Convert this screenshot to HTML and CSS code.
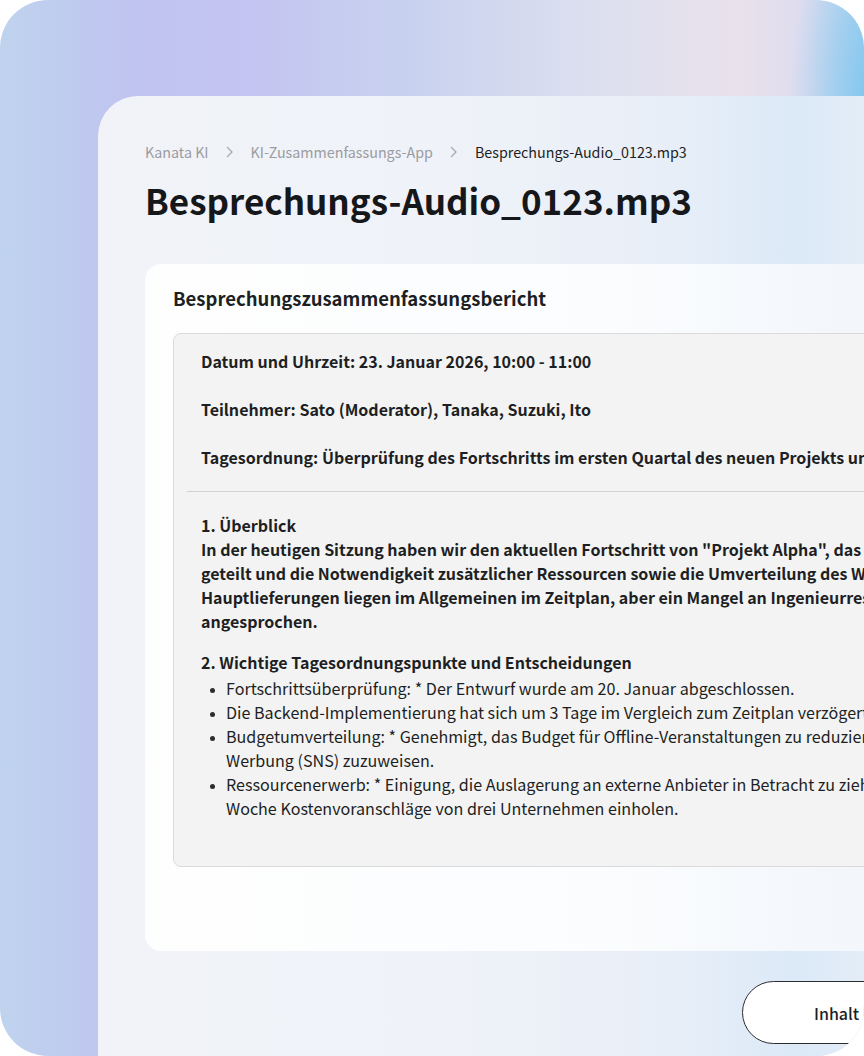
FILE: index.html
```html
<!DOCTYPE html>
<html lang="de">
<head>
<meta charset="utf-8">
<title>Besprechungs-Audio_0123.mp3</title>
<link rel="stylesheet" href="styles.css">
</head>
<body>
<div class="frame">
  <div class="panel">
    <nav class="crumbs">
      <span class="crumb">Kanata KI</span>
      <svg class="chev" width="8" height="12" viewBox="0 0 8 12"><path d="M1.5 1.5 L6 6 L1.5 10.5" fill="none" stroke="#a9abb0" stroke-width="1.4" stroke-linecap="round" stroke-linejoin="round"/></svg>
      <span class="crumb">KI-Zusammenfassungs-App</span>
      <svg class="chev" width="8" height="12" viewBox="0 0 8 12"><path d="M1.5 1.5 L6 6 L1.5 10.5" fill="none" stroke="#a9abb0" stroke-width="1.4" stroke-linecap="round" stroke-linejoin="round"/></svg>
      <span class="crumb current">Besprechungs-Audio_0123.mp3</span>
    </nav>
    <h1 class="title">Besprechungs-Audio_0123.mp3</h1>

    <section class="card">
      <h2 class="card-title">Besprechungszusammenfassungsbericht</h2>
      <div class="report">
        <div class="meta">
          <p>Datum und Uhrzeit: 23. Januar 2026, 10:00 - 11:00</p>
          <p>Teilnehmer: Sato (Moderator), Tanaka, Suzuki, Ito</p>
          <p>Tagesordnung: Überprüfung des Fortschritts im ersten Quartal des neuen Projekts und Umverteilung des Budgets</p>
        </div>
        <hr class="rule">
        <div class="body">
          <p class="strong">1. Überblick<br>In der heutigen Sitzung haben wir den aktuellen Fortschritt von "Projekt Alpha", das im April starten soll, mit allen Beteiligten<br>geteilt und die Notwendigkeit zusätzlicher Ressourcen sowie die Umverteilung des Werbebudgets besprochen. Die<br>Hauptlieferungen liegen im Allgemeinen im Zeitplan, aber ein Mangel an Ingenieurressourcen wurde als Risiko<br>angesprochen.</p>
          <p class="strong sec">2. Wichtige Tagesordnungspunkte und Entscheidungen</p>
          <ul class="items">
            <li>Fortschrittsüberprüfung: * Der Entwurf wurde am 20. Januar abgeschlossen.</li>
            <li>Die Backend-Implementierung hat sich um 3 Tage im Vergleich zum Zeitplan verzögert.</li>
            <li>Budgetumverteilung: * Genehmigt, das Budget für Offline-Veranstaltungen zu reduzieren und der digitalen<br>Werbung (SNS) zuzuweisen.</li>
            <li>Ressourcenerwerb: * Einigung, die Auslagerung an externe Anbieter in Betracht zu ziehen. Suzuki wird bis nächste<br>Woche Kostenvoranschläge von drei Unternehmen einholen.</li>
          </ul>
        </div>
      </div>
    </section>

    <div class="footer">
      <button class="btn" type="button">Inhalt kopieren</button>
    </div>
  </div>
</div>
</body>
</html>
```
FILE: styles.css
```css
* { box-sizing: border-box; }
html, body { margin: 0; padding: 0; background: #ffffff; }
body {
  font-family: "Noto Sans CJK JP", "Noto Sans", sans-serif;
  color: #1d1f23;
}
.frame {
  width: 864px;
  height: 1056px;
  border-radius: 48px;
  overflow: hidden;
  padding: 96px 0 0 98px;
  background:
    radial-gradient(ellipse 90px 220px at 880px 100px, rgba(120,196,238,0.95), rgba(140,205,238,0) 100%),
    linear-gradient(90deg, #bfd3ee 0px, #c0c4f0 130px, #c3c4f1 240px, #c9d2ef 420px, #dde0ef 600px, #e9e1ec 740px, #dcdcef 810px, #b8d6f0 864px);
}
.panel {
  width: 931px;
  height: 1000px;
  border-top-left-radius: 40px;
  padding: 0 47px;
  background:
    linear-gradient(90deg, #f1f3f8 0px, #eff2f8 350px, #e9eff8 550px, #dce9f7 700px, #e3edf7 766px);
}
.crumbs {
  display: flex;
  align-items: center;
  gap: 17px;
  padding-top: 44px;
  height: 68px;
  font-size: 14.3px;
  line-height: 24px;
}
.crumb { color: #9a9ca1; }
.crumb.current { color: #1d1f23; }
.chev { display: block; }
.title {
  margin: 13px 0 0 0;
  font-size: 35px;
  line-height: 46px;
  font-weight: 700;
  color: #15171a;
  letter-spacing: 0;
}
.card {
  margin-top: 41px;
  width: 837px;
  height: 687px;
  border-radius: 16px;
  background: linear-gradient(90deg, rgba(255,255,255,0.92) 0px, rgba(253,254,255,0.9) 450px, rgba(246,249,252,0.85) 720px);
  padding: 20px 28px 0 28px;
}
.card-title {
  margin: 0;
  font-size: 18.5px;
  line-height: 28px;
  font-weight: 700;
  color: #1d1f23;
}
.report {
  margin-top: 21px;
  height: 534px;
  background: #f3f3f3;
  border: 1px solid #dadada;
  border-radius: 8px;
  padding: 15px 13px 0 13px;
}
.meta { padding: 0 14px; }
.meta p {
  margin: 0 0 24px 0;
  font-size: 16px;
  line-height: 24px;
  font-weight: 700;
  white-space: nowrap;
}
.meta p:last-child { margin-bottom: 0; }
.rule {
  margin: 22px 0 0 0;
  border: 0;
  border-top: 1px solid #d2d2d2;
  height: 0;
}
.body { padding: 21px 14px 0 14px; }
.body p {
  margin: 0;
  font-size: 16px;
  line-height: 24px;
  white-space: nowrap;
}
.strong { font-weight: 700; }
.body p.sec { margin-top: 17px; }
.items {
  margin: 2px 0 0 0;
  padding-left: 25px;
  font-size: 16.1px;
  line-height: 24px;
  white-space: nowrap;
}
.items li::marker { font-size: 12px; color: #2a2c30; }
.footer {
  display: flex;
  justify-content: flex-end;
  margin-top: 30px;
}
.btn {
  width: 240px;
  height: 63px;
  border-radius: 32px;
  border: 1px solid #2a2c30;
  background: #ffffff;
  font-family: "Noto Sans CJK JP", "Noto Sans", sans-serif;
  font-size: 16px;
  font-weight: 500;
  color: #1d1f23;
  text-align: left;
  padding: 0 0 0 71px;
}
```
